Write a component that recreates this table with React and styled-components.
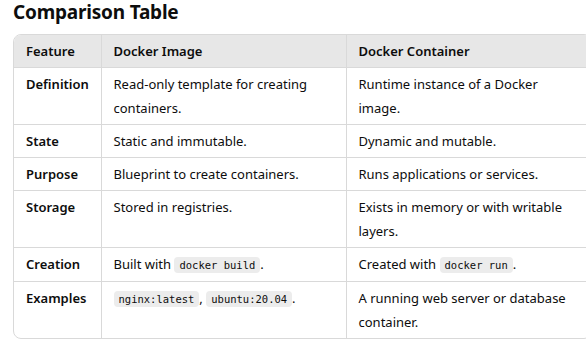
import styled, { createGlobalStyle } from 'styled-components';

const GlobalStyle = createGlobalStyle`
  html, body {
    margin: 0;
    padding: 0;
    background: #ffffff;
    overflow: hidden;
  }
  body {
    font-family: "Noto Sans", "Open Sans", sans-serif;
    color: #0d0d0d;
  }
`;

const Page = styled.div`
  width: 586px;
  height: 339px;
  padding-left: 13px;
  box-sizing: border-box;
`;

const Title = styled.h3`
  margin: 0;
  font-size: 19px;
  line-height: 24px;
  font-weight: 700;
  letter-spacing: -0.2px;
  color: #0d0d0d;
  height: 34px;
`;

const TableWrap = styled.div`
  width: 577px;
  border: 1px solid #d9d9d9;
  border-radius: 8px;
  overflow: hidden;
`;

const Table = styled.table`
  width: 577px;
  border-collapse: collapse;
  table-layout: fixed;
  font-size: 13px;
  line-height: 24px;
`;

const HeadCell = styled.th`
  background: #e7e7e7;
  text-align: left;
  font-weight: 600;
  padding: 4px 12px;
  width: ${p => p.$w}px;
  border-left: ${p => (p.$first ? 'none' : '1px solid #d9d9d9')};
  border-bottom: 1px solid #d9d9d9;
`;

const Cell = styled.td`
  padding: 4px 12px;
  vertical-align: top;
  font-weight: ${p => (p.$first ? 600 : 400)};
  border-left: ${p => (p.$first ? 'none' : '1px solid #d9d9d9')};
  border-top: 1px solid #d9d9d9;
`;

const Code = styled.code`
  font-family: "DejaVu Sans Mono", "Liberation Mono", monospace;
  font-size: 10.5px;
  background: #ececec;
  border-radius: 4px;
  padding: 2px 5px;
`;

const rows = [
  ['Definition', 'Read-only template for creating containers.', 'Runtime instance of a Docker image.'],
  ['State', 'Static and immutable.', 'Dynamic and mutable.'],
  ['Purpose', 'Blueprint to create containers.', 'Runs applications or services.'],
  ['Storage', 'Stored in registries.', 'Exists in memory or with writable layers.'],
  ['Creation', <>Built with <Code>docker build</Code>.</>, <>Created with <Code>docker run</Code>.</>],
  ['Examples', <><Code>nginx:latest</Code>, <Code>ubuntu:20.04</Code>.</>, 'A running web server or database container.'],
];

export default function App() {
  return (
    <>
      <GlobalStyle />
      <Page>
        <Title>Comparison Table</Title>
        <TableWrap>
          <Table>
            <colgroup>
              <col style={{ width: 87 }} />
              <col style={{ width: 245 }} />
              <col style={{ width: 245 }} />
            </colgroup>
            <thead>
              <tr>
                <HeadCell $first>Feature</HeadCell>
                <HeadCell>Docker Image</HeadCell>
                <HeadCell>Docker Container</HeadCell>
              </tr>
            </thead>
            <tbody>
              {rows.map(r => (
                <tr key={r[0]}>
                  <Cell $first>{r[0]}</Cell>
                  <Cell>{r[1]}</Cell>
                  <Cell>{r[2]}</Cell>
                </tr>
              ))}
            </tbody>
          </Table>
        </TableWrap>
      </Page>
    </>
  );
}
